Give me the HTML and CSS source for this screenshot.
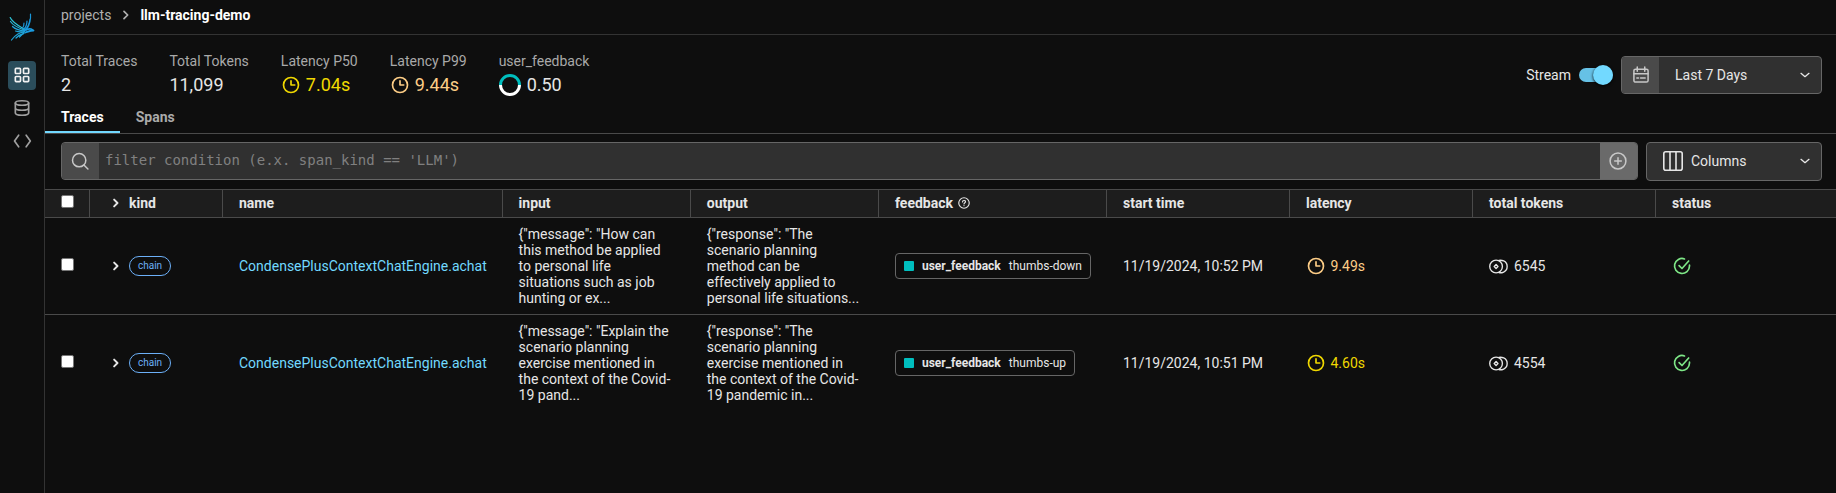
FILE: index.html
```html
<!DOCTYPE html>
<html lang="en">
<head>
<meta charset="utf-8">
<title>llm-tracing-demo</title>
<link rel="stylesheet" href="styles.css">
</head>
<body>
<svg class="defs" width="0" height="0">
  <symbol id="clock" viewBox="0 0 24 24"><circle cx="12" cy="12" r="9"/><path d="M12 7v5h4.5"/></symbol>
  <symbol id="chev" viewBox="0 0 24 24"><path d="M9.5 7.5l4.5 4.5-4.5 4.5"/></symbol>
  <symbol id="down" viewBox="0 0 24 24"><path d="M6 9.5l6 5 6-5"/></symbol>
  <symbol id="tokens" viewBox="0 0 18 14"><circle cx="6.7" cy="7" r="6"/><path d="M6.7 5.200L8.500 7 6.700 8.800 4.900 7z"/><path d="M9.500 1.200c1.500-.4 7.700 0 7.700 5.800s-6.200 6.200-7.700 5.800"/></symbol>
  <symbol id="check" viewBox="0 0 24 24"><path d="M15 3.500A9 9 0 1 0 21 12V11"/><path d="M8.500 11.500l3.500 3.500 8-9"/></symbol>
</svg>
<div class="app">
  <nav class="nav">
    <svg class="logo" viewBox="0 0 36 36"><g fill="none" stroke-linecap="round">
      <path stroke="#2fc4d6" d="M6.200 9.500c2 5 8 8 14 11.500"/>
      <path stroke="#27b6d8" d="M6.500 13.500c3 4.500 8 6.500 14 8.500"/>
      <path stroke="#1fa6dc" d="M8.500 18.500c3 3 7 4 12 4.500"/>
      <path stroke="#1fa6dc" d="M11.500 23c3 1 6 1 9 .5"/>
      <path stroke="#1a96d8" d="M26.500 6c.5 6-1 11-4 16M26 11c-.5 4-2 8-5 11M23 13c0 4-1 6-3 8M20 15c0 3-.5 4-1.500 5"/>
      <path stroke="#1a9be0" stroke-width="1.800" d="M20 22.500c3-1.500 5-2 7-1.500l2.500 1.500c-3 0-5 1-8 2"/>
      <path stroke="#1fa6dc" d="M21 24c-4 0-9 2-13.500 8M20 25c-3 1-6 3-8 5M20 25.500c-1.500.5-3 2-4.500 3.500"/>
    </g></svg>
    <a class="nav-item active"><svg viewBox="0 0 24 24"><rect x="4" y="4" width="6.200" height="6.200" rx="1"/><rect x="13.800" y="4" width="6.200" height="6.200" rx="1"/><rect x="4" y="13.800" width="6.200" height="6.200" rx="1"/><rect x="13.800" y="13.800" width="6.200" height="6.200" rx="1"/></svg></a>
    <a class="nav-item"><svg viewBox="0 0 24 24"><ellipse cx="12" cy="6" rx="8" ry="2.700"/><path d="M4 6v12c0 1.500 3.500 2.700 8 2.700s8-1.200 8-2.700V6M4 12c0 1.500 3.500 2.700 8 2.700s8-1.200 8-2.700"/></svg></a>
    <a class="nav-item"><svg viewBox="0 0 24 24"><path d="M8 5l-5 7 5 7M17 5l5 7-5 7"/></svg></a>
  </nav>
  <main class="main">
    <div class="crumbs"><span>projects</span><svg class="crumb-sep" viewBox="0 0 24 24"><path d="M9 6.500l5.500 5.500L9 17.500"/></svg><b>llm-tracing-demo</b></div>
    <header class="summary">
      <dl class="stat"><dt>Total Traces</dt><dd>2</dd></dl>
      <dl class="stat"><dt>Total Tokens</dt><dd>11,099</dd></dl>
      <dl class="stat"><dt>Latency P50</dt><dd class="yellow"><svg class="clock"><use href="#clock"/></svg>7.04s</dd></dl>
      <dl class="stat"><dt>Latency P99</dt><dd class="orange"><svg class="clock"><use href="#clock"/></svg>9.44s</dd></dl>
      <dl class="stat"><dt>user_feedback</dt><dd><svg class="donut" viewBox="0 0 22 22"><path d="M1.500 11a9.500 9.500 0 0 1 19 0" stroke="#00bebe"/><path d="M1.500 11a9.500 9.500 0 0 0 19 0" stroke="#fff"/></svg>0.50</dd></dl>
      <div class="controls">
        <span>Stream</span><span class="switch"><i></i></span>
        <div class="picker"><span class="addon"><svg viewBox="0 0 24 24"><rect x="3.500" y="5" width="17" height="15.500" rx="2"/><path d="M3.500 10.500h17M7.500 2.500v5M16.500 2.500v5M7 15.500h2M11.500 15.500h5.500"/></svg></span><span class="label">Last 7 Days</span><svg class="down"><use href="#down"/></svg></div>
      </div>
    </header>
    <div class="tabs"><span class="tab selected">Traces</span><span class="tab">Spans</span></div>
    <div class="toolbar">
      <div class="filter"><span class="addon"><svg viewBox="0 0 24 24"><circle cx="11" cy="11" r="8"/><path d="M17 17l4.500 4.500"/></svg></span><span class="placeholder">filter condition (e.x. span_kind == 'LLM')</span><span class="add"><svg viewBox="0 0 24 24"><circle cx="12" cy="12" r="9.500"/><path d="M12 8v8M8 12h8"/></svg></span></div>
      <div class="columns"><svg class="cols" viewBox="0 0 20 20"><rect x=".8" y=".8" width="18.400" height="18.400" rx="2"/><path d="M7 1v18M13 1v18"/></svg><span>Columns</span><svg class="down"><use href="#down"/></svg></div>
    </div>
    <div class="table">
      <div class="row head">
        <div><span class="box"></span></div>
        <div class="kind"><svg class="chev"><use href="#chev"/></svg>kind</div>
        <div>name</div><div>input</div><div>output</div>
        <div>feedback<svg class="help" viewBox="0 0 24 24"><circle cx="12" cy="12" r="10.500"/><path d="M9 10c0-4 6-4 6-.5 0 2-3 2-3 4.500M12 17v.5"/></svg></div>
        <div>start time</div><div>latency</div><div>total tokens</div><div>status</div>
      </div>
      <div class="row">
        <div><span class="box"></span></div>
        <div class="kind"><svg class="chev"><use href="#chev"/></svg><span class="chain">chain</span></div>
        <div><a class="link">CondensePlusContextChatEngine.achat</a></div>
        <div><p>{"message": "How can<br>this method be applied<br>to personal life<br>situations such as job<br>hunting or ex...</p></div>
        <div><p>{"response": "The<br>scenario planning<br>method can be<br>effectively applied to<br>personal life situations...</p></div>
        <div><span class="tag"><i></i><b>user_feedback</b>thumbs-down</span></div>
        <div>11/19/2024, 10:52 PM</div>
        <div class="orange"><svg class="clock"><use href="#clock"/></svg>9.49s</div>
        <div><svg class="tokens"><use href="#tokens"/></svg>6545</div>
        <div><svg class="check"><use href="#check"/></svg></div>
      </div>
      <div class="row last">
        <div><span class="box"></span></div>
        <div class="kind"><svg class="chev"><use href="#chev"/></svg><span class="chain">chain</span></div>
        <div><a class="link">CondensePlusContextChatEngine.achat</a></div>
        <div><p>{"message": "Explain the<br>scenario planning<br>exercise mentioned in<br>the context of the Covid-<br>19 pand...</p></div>
        <div><p>{"response": "The<br>scenario planning<br>exercise mentioned in<br>the context of the Covid-<br>19 pandemic in...</p></div>
        <div><span class="tag"><i></i><b>user_feedback</b>thumbs-up</span></div>
        <div>11/19/2024, 10:51 PM</div>
        <div class="yellow"><svg class="clock"><use href="#clock"/></svg>4.60s</div>
        <div><svg class="tokens"><use href="#tokens"/></svg>4554</div>
        <div><svg class="check"><use href="#check"/></svg></div>
      </div>
    </div>
  </main>
</div>
</body>
</html>
```

FILE: styles.css
```css
* { box-sizing: border-box; }
body { margin: 0; background: #0e0e0e; color: #e6e6e6; font: 14px/16px Roboto, sans-serif; }
svg { fill: none; stroke: currentColor; stroke-width: 2; stroke-linecap: round; stroke-linejoin: round; flex: none; display: block; }
.defs { position: absolute; }
.app { display: flex; height: 493px; overflow: hidden; }
.nav { width: 45px; border-right: 1px solid #333; padding: 8px 0 0 8px; flex: none; }
.logo { width: 36px; height: 36px; margin: 0 0 17px -4px; stroke-width: 1.2; }
.nav-item { display: flex; width: 28px; height: 29px; margin-bottom: 4px; padding-bottom: 1px; border-radius: 4px; align-items: center; justify-content: center; color: #a0a0a0; }
.nav-item.active { background: #2b4d5b; color: #f2f2f2; }
.nav-item svg { width: 20px; height: 20px; stroke-width: 2; }
.main { flex: 1; min-width: 0; }
.crumbs { height: 35px; border-bottom: 1px solid #333; display: flex; align-items: center; padding: 0 0 5px 16px; color: #b0b0b0; }
.crumbs b { color: #fff; }
.crumb-sep { width: 16px; height: 16px; margin: 0 6px 0 7px; stroke-width: 2.600; }
.summary { display: flex; gap: 32px; padding: 18px 14px 0 16px; height: 66px; }
.stat { margin: 0; }
.stat dt { color: #a9a9a9; line-height: 16px; }
.stat dd { margin: 5px 0 0; font-size: 18px; line-height: 22px; height: 22px; display: flex; align-items: center; gap: 5px; }
.clock { width: 20px; height: 20px; }
.donut { width: 22px; height: 22px; stroke-width: 3; stroke-linecap: butt; margin-right: 1px; }
.yellow { color: #f0d800; }
.orange { color: #fdcd86; }
.controls { margin-left: auto; display: flex; align-items: center; height: 38px; margin-top: 3px; }
.switch { width: 34px; height: 14px; margin: 0 8px; border-radius: 7px; background: #66c1e6; position: relative; }
.switch i { position: absolute; right: 0; top: -3px; width: 20px; height: 20px; border-radius: 50%; background: #72d9ff; box-shadow: 0 1px 3px #000; }
.picker, .filter, .columns { display: flex; align-items: center; border: 1px solid #666; border-radius: 4px; background: #303030; overflow: hidden; height: 38px; }
.picker { width: 201px; }
.addon, .add { width: 37px; height: 100%; padding-right: 1px; display: flex; align-items: center; justify-content: center; background: #4a4a4a; color: #c8c8c8; }
.addon svg, .add svg { width: 20px; height: 20px; stroke-width: 1.800; }
.picker .addon { padding-right: 0; }
.label { margin-left: 16px; }
.down { width: 16px; height: 16px; margin: 0 8px 0 auto; }
.tabs { height: 33px; border-bottom: 1px solid #4a4a4a; display: flex; font-weight: 700; color: #aaa; }
.tab { padding: 8px 16px 0; height: 32px; }
.tab.selected { color: #fff; border-bottom: 2px solid #72d9ff; }
.toolbar { display: flex; gap: 8px; padding: 8px 14px 0 16px; height: 55px; }
.filter { flex: 1; }
.placeholder { flex: 1; margin-left: 6px; padding-bottom: 2px; color: #808080; font: 14px/20px "DejaVu Sans Mono", monospace; }
.add { background: #6a6a6a; }
.columns { width: 176px; height: 39px; padding: 0 0 1px 16px; }
.columns .cols { width: 20px; height: 20px; margin-right: 8px; stroke-width: 1.600; }
.row { display: grid; grid-template-columns: 45px 133px 279.600px 188.200px 188.200px 228px 183px 183px 183px 1fr; height: 97px; border-bottom: 1px solid #4a4a4a; }
.row > div { display: flex; align-items: center; padding-left: 16px; white-space: nowrap; }
.row p { margin: 0; line-height: 16.100px; }
.last { border-bottom-color: transparent; }
.head { height: 29px; border-top: 1px solid #4a4a4a; background: #1d1d1d; font-weight: 700; }
.head > div { padding-bottom: 1px; border-right: 1px solid #4a4a4a; }
.head > div:last-child { border-right: 0; }
.box { width: 13px; height: 13px; background: #fff; border: 1px solid #767676; border-radius: 2px; margin-bottom: 3px; }
.row > .kind { padding-left: 17px; gap: 4px; }
.chev { width: 18px; height: 18px; stroke-width: 2.600; }
.chain { border: 1px solid #6cb0f8; border-radius: 10px; color: #6cb0f8; font-size: 10px; line-height: 18px; height: 20px; padding: 0 8px; }
.link { color: #72d9ff; }
.help { width: 12px; height: 12px; margin-left: 5px; stroke-width: 2.300; }
.tag { display: flex; align-items: center; border: 1px solid #666; border-radius: 4px; height: 26px; padding: 0 8px; font-size: 12px; }
.tag i { width: 10px; height: 10px; background: #00bebe; border-radius: 1px; margin-right: 8px; }
.tag b { margin-right: 8px; }
.row .clock { margin-right: 4.500px; }
.tokens { width: 19px; height: 15px; stroke-width: 1.300; margin-right: 6px; }
.check { width: 20px; height: 20px; color: #7ee787; margin-left: .5px; }
```
